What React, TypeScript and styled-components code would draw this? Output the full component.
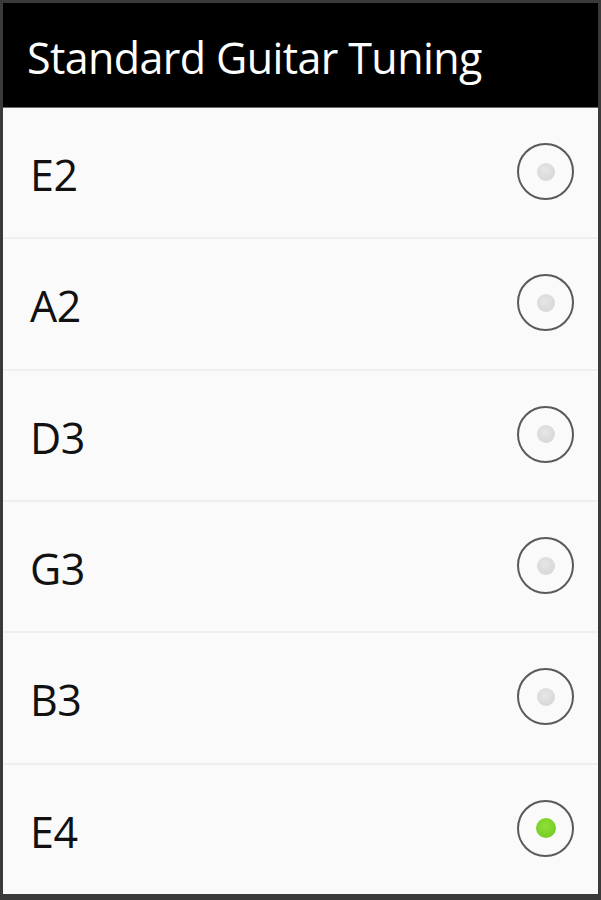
import styled, { createGlobalStyle } from "styled-components";

const GlobalStyle = createGlobalStyle`
  html, body {
    margin: 0;
    padding: 0;
    background: #3a3a3a;
  }
`;

const Frame = styled.div`
  width: 601px;
  height: 900px;
  box-sizing: border-box;
  border-style: solid;
  border-color: #3a3a3a;
  border-width: 3px 3px 6px 3px;
  display: flex;
  flex-direction: column;
  background: #fafafa;
  font-family: "Open Sans", "Noto Sans", sans-serif;
`;

const Header = styled.div`
  height: 105px;
  background: #000;
  color: #fff;
  display: flex;
  align-items: center;
  padding: 4px 0 0 24px;
  box-sizing: border-box;
  font-size: 43px;
  letter-spacing: -0.6px;
  border-bottom: 1px solid #6a6a6a;
  flex-shrink: 0;
`;

const List = styled.div`
  flex: 1;
  display: flex;
  flex-direction: column;
`;

const Row = styled.div<{ $last?: boolean }>`
  flex: 1;
  display: flex;
  align-items: center;
  justify-content: space-between;
  padding: 0 24px 0 27px;
  border-bottom: ${(p) => (p.$last ? "none" : "2px solid #efefef")};
`;

const Note = styled.span`
  font-size: 43px;
  color: #111;
  margin-top: 4px;
  letter-spacing: -0.5px;
`;

const Radio = styled.div`
  width: 53px;
  height: 53px;
  border-radius: 50%;
  border: 2px solid #5a5a5a;
  display: flex;
  align-items: center;
  justify-content: center;
  margin-top: -2px;
`;

const Dot = styled.div<{ $on?: boolean }>`
  width: ${(p) => (p.$on ? 20 : 18)}px;
  height: ${(p) => (p.$on ? 20 : 18)}px;
  border-radius: 50%;
  background: ${(p) =>
    p.$on
      ? "radial-gradient(circle at 45% 40%, #8fe03a, #6cc51c)"
      : "radial-gradient(circle at 45% 40%, #e6e6e6, #d2d2d2)"};
`;

const notes = ["E2", "A2", "D3", "G3", "B3", "E4"];
const selected = "E4";

export default function App() {
  return (
    <>
      <GlobalStyle />
      <Frame>
        <Header>Standard Guitar Tuning</Header>
        <List>
          {notes.map((n, i) => (
            <Row key={n} $last={i === notes.length - 1}>
              <Note>{n}</Note>
              <Radio>
                <Dot $on={n === selected} />
              </Radio>
            </Row>
          ))}
        </List>
      </Frame>
    </>
  );
}
